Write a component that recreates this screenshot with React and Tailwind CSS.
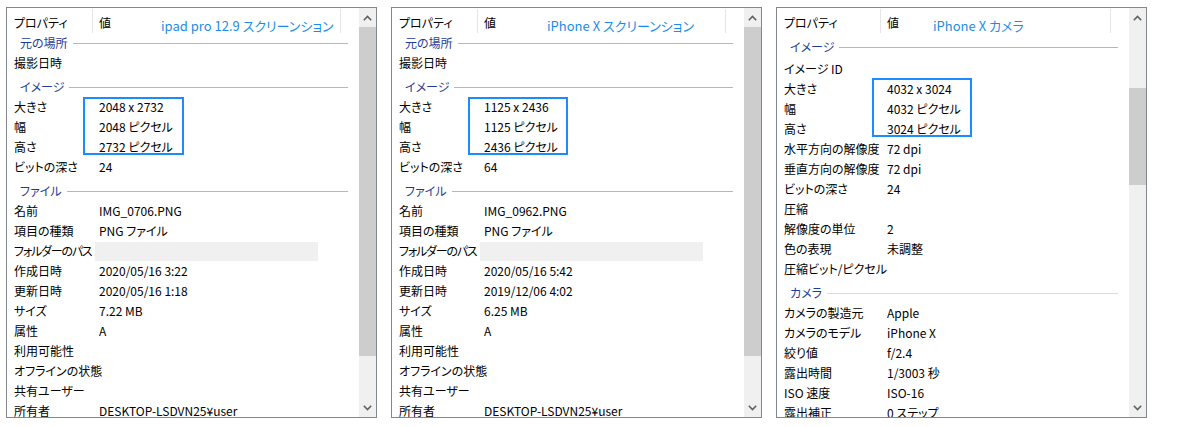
import React from "react";

const FONT = "[font-family:'Noto_Sans_CJK_JP',sans-serif] [font-feature-settings:'palt']";

const fileRows = (name, created, modified, size) => [
  { g: "ファイル" },
  ["名前", name],
  ["項目の種類", "PNG ファイル"],
  { label: "フォルダーのパス", bar: true },
  ["作成日時", created],
  ["更新日時", modified],
  ["サイズ", size],
  ["属性", "A"],
  ["利用可能性", ""],
  ["オフラインの状態", ""],
  ["共有ユーザー", ""],
  ["所有者", "DESKTOP-LSDVN25¥user"],
];

const panels = [
  {
    note: "ipad pro 12.9 スクリーンション",
    noteMl: "ml-[50px]",
    labelW: "w-[86px]",
    headW: "w-[248px]",
    thumb: "mt-0 h-[329px]",
    box: "left-[76px] top-[89px] w-[101px] h-[58px]",
    rows: [
      { g: "元の場所", first: true },
      ["撮影日時", ""],
      { g: "イメージ" },
      ["大きさ", "2048 x 2732"],
      ["幅", "2048 ピクセル"],
      ["高さ", "2732 ピクセル"],
      ["ビットの深さ", "24"],
      ...fileRows("IMG_0706.PNG", "2020/05/16 3:22", "2020/05/16 1:18", "7.22 MB"),
    ],
  },
  {
    note: "iPhone X スクリーンション",
    noteMl: "ml-[51px]",
    labelW: "w-[86px]",
    headW: "w-[248px]",
    thumb: "mt-0 h-[329px]",
    box: "left-[76px] top-[89px] w-[100px] h-[58px]",
    rows: [
      { g: "元の場所", first: true },
      ["撮影日時", ""],
      { g: "イメージ" },
      ["大きさ", "1125 x 2436"],
      ["幅", "1125 ピクセル"],
      ["高さ", "2436 ピクセル"],
      ["ビットの深さ", "64"],
      ...fileRows("IMG_0962.PNG", "2020/05/16 5:42", "2019/12/06 4:02", "6.25 MB"),
    ],
  },
  {
    note: "iPhone X カメラ",
    noteMl: "ml-[34px]",
    labelW: "w-[104px]",
    headW: "w-[230px]",
    thumb: "mt-[61px] h-[97px]",
    box: "left-[95px] top-[70px] w-[100px] h-[59px]",
    rows: [
      { g: "イメージ", top: true },
      ["イメージ ID", ""],
      ["大きさ", "4032 x 3024"],
      ["幅", "4032 ピクセル"],
      ["高さ", "3024 ピクセル"],
      ["水平方向の解像度", "72 dpi"],
      ["垂直方向の解像度", "72 dpi"],
      ["ビットの深さ", "24"],
      ["圧縮", ""],
      ["解像度の単位", "2"],
      ["色の表現", "未調整"],
      ["圧縮ビット/ピクセル", ""],
      { g: "カメラ", light: true },
      ["カメラの製造元", "Apple"],
      ["カメラのモデル", "iPhone X"],
      ["絞り値", "f/2.4"],
      ["露出時間", "1/3003 秒"],
      ["ISO 速度", "ISO-16"],
      ["露出補正", "0 ステップ"],
    ],
  },
];

const Chevron = ({ down }) => (
  <svg width="9" height="6" viewBox="0 0 9 6" className={down ? "rotate-180" : ""}>
    <polyline points="0.8,5.2 4.5,1.5 8.2,5.2" fill="none" stroke="#606060" strokeWidth="1.6" />
  </svg>
);

const Row = ({ row, labelW }) => {
  if (!Array.isArray(row) && row.g) {
    const pad = row.first ? "h-[20px]" : row.top ? "pt-[4px] pb-[2px]" : "pt-[4px]";
    return (
      <div className={`flex items-center pl-[13px] pr-[11px] ${pad}`}>
        <span className="leading-[20px] text-[#1e3c96] whitespace-nowrap">{row.g}</span>
        <div className={`ml-[5px] flex-1 h-px ${row.light ? "bg-[#d6dde9]" : "bg-[#aab6dc]"}`} />
      </div>
    );
  }
  const label = Array.isArray(row) ? row[0] : row.label;
  return (
    <div className="flex h-[20px] items-center leading-[20px]">
      <div className={`${labelW} shrink-0 pl-[7px] whitespace-nowrap ${row.bar ? "tracking-[-1.2px] relative z-10" : ""}`}>
        {label}
      </div>
      {row.bar ? (
        <div className="ml-[2px] w-[223px] h-[19px] bg-[#f0f0f0]" />
      ) : (
        <div className="pl-[6px] whitespace-nowrap">{row[1]}</div>
      )}
    </div>
  );
};

const Panel = ({ p }) => (
  <div className="w-[371px] h-[411px] border border-[#828790] flex overflow-hidden bg-white">
    <div className="relative flex-1 overflow-hidden">
      <div className="flex h-[25px]">
        <div className={`${p.labelW} shrink-0 pl-[7px] leading-[28px] border-r border-[#e5e5e5] mt-px`}>
          プロパティ
        </div>
        <div className={`${p.headW} shrink-0 pl-[6px] flex border-r border-[#e5e5e5] mt-px`}>
          <span className="leading-[28px]">値</span>
          <span className={`${p.noteMl} mt-[7px] leading-[20px] text-[13px] text-[#1b8de6] whitespace-nowrap`}>
            {p.note}
          </span>
        </div>
      </div>
      {p.rows.map((r, i) => (
        <Row key={i} row={r} labelW={p.labelW} />
      ))}
      <div className={`absolute border-2 border-[#1a8cff] ${p.box}`} />
    </div>
    <div className="w-[17px] shrink-0 bg-[#f0f0f0] flex flex-col">
      <div className="h-[19px] flex items-center justify-center">
        <Chevron />
      </div>
      <div className="flex-1">
        <div className={`bg-[#cdcdcd] ${p.thumb}`} />
      </div>
      <div className="h-[18px] flex items-center justify-center">
        <Chevron down />
      </div>
    </div>
  </div>
);

export default function App() {
  return (
    <div className={`w-[1200px] h-[427px] bg-white text-[12px] text-black ${FONT}`}>
      <div className="flex gap-[14px] pl-[6px] pt-[7px]">
        {panels.map((p, i) => (
          <Panel key={i} p={p} />
        ))}
      </div>
    </div>
  );
}
